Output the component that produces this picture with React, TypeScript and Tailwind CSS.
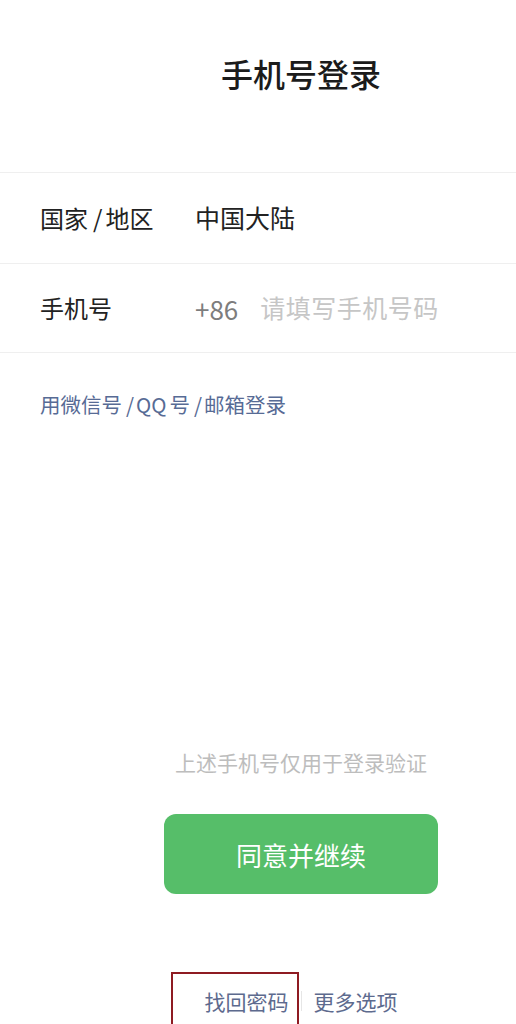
import React from "react";

const font = { fontFamily: '"Noto Sans CJK SC", "Noto Sans", sans-serif' };

function Row({ label, children, last }: { label: React.ReactNode; children: React.ReactNode; last?: boolean }) {
  return (
    <div className={`flex items-center px-10 border-t border-[#efefef] ${last ? "h-[90px] border-b" : "h-[91px]"}`}>
      <span className="w-[155px] text-[24px] text-[#222]">{label}</span>
      {children}
    </div>
  );
}

export default function App() {
  return (
    <div className="w-[516px] h-[1024px] overflow-hidden bg-white" style={font}>
      <div className="w-[602px] flex flex-col">
        <h1 className="mt-[53px] h-[40px] text-center text-[32px] leading-[40px] font-medium text-[#1b1b1b]">
          手机号登录
        </h1>

        <div className="mt-[79px]">
          <Row
            label={
              <>
                国家<span className="ml-[5px] mr-[3px]">/</span>地区
              </>
            }
          >
            <span className="text-[25px] text-[#222]">中国大陆</span>
          </Row>
          <Row label="手机号" last>
            <span className="text-[26px] text-[#7d7d7d]">+86</span>
            <span className="ml-[22px] text-[25px] text-[#c6c6c6] tracking-[0.5px]">请填写手机号码</span>
          </Row>
        </div>

        <a className="mt-[37px] px-10 text-[20.5px] leading-[28px] text-[#576b95]">
          用微信号<span className="ml-[4px] mr-[2px]">/</span>QQ<span className="ml-[3px]">号</span>
          <span className="ml-[4px] mr-[2px]">/</span>邮箱登录
        </a>

        <p className="mt-[330px] text-center text-[21px] leading-[28px] text-[#bdbdbd]">
          上述手机号仅用于登录验证
        </p>

        <button className="mt-[38px] mx-auto w-[274px] h-[80px] rounded-[12px] bg-[#56be69] text-white text-[26px]">
          同意并继续
        </button>

        <div className="mt-[93px] flex items-center justify-center text-[21px] leading-[28px] text-[#5d6a8e]">
          <span className="relative">
            找回密码
            <span className="absolute left-[-34px] right-[-10px] top-[-15px] h-[60px] border-2 border-[#8e1b22]" />
          </span>
          <span className="mx-[12px] h-[20px] w-px bg-[#e6e6e6]" />
          <span>更多选项</span>
        </div>
      </div>
    </div>
  );
}
